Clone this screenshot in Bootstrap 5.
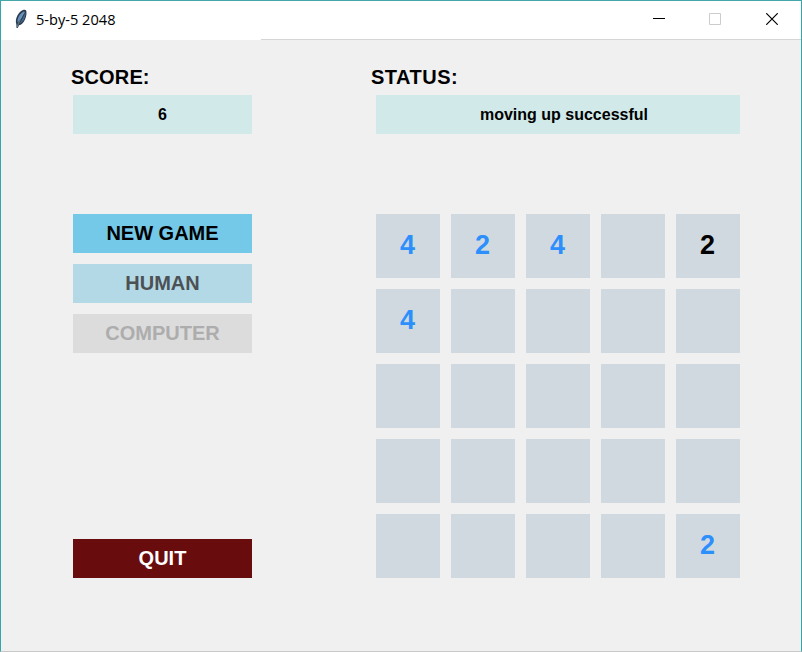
<!DOCTYPE html>
<html lang="en">
<head>
<meta charset="utf-8">
<title>5-by-5 2048</title>
<meta name="viewport" content="width=device-width, initial-scale=1">
<link href="https://cdn.jsdelivr.net/npm/bootstrap@5.3.0/dist/css/bootstrap.min.css" rel="stylesheet">
<style>
body { font-family: "Liberation Sans", Arial, sans-serif; font-kerning: none; color: #000; }
.window { width: 802px; height: 652px; background: #f0f0f0; border: 1px solid #35a5ac; border-top-color: #45a7a7; border-bottom-color: #c8c8c8; }
.titlebar { height: 39px; background: linear-gradient(#d5d5d5, #d5d5d5) 260px 100% / 100% 1px no-repeat #fff; padding: 0 1px 3px 13px; }
.titlebar h1 { font: 400 14.6px/20px "Open Sans", "Noto Sans", sans-serif; letter-spacing: 0; margin: 0 0 0 7px; }
.winbtn { width: 56.5px; height: 36px; padding: 0 0 1px; background: none; border: 0; }
.client { padding: 26px 61px 0 72px; }
.side { width: 179px; }
.main { width: 364px; }
.heading { font: 700 20px/23px "Liberation Sans", Arial, sans-serif; letter-spacing: .15px; margin: 0 0 6px -2px; }
.main .heading { margin-left: -5px; letter-spacing: .5px; }
.field { height: 39px; background: #d1eae9; font-size: 16px; font-weight: 700; margin-bottom: 80px; }
.status-text { padding-left: 12px; }
.btn-game { --bs-btn-padding-y: 0; --bs-btn-border-radius: 0; --bs-btn-border-width: 0; height: 39px; font-size: 20px; line-height: 37px; font-weight: 700; }
.btn-new { background: #74c9e8; color: #000; }
.btn-human { background: #b4d9e6; color: #4c5155; }
.btn-computer { background: #dcdcdc; color: #adadad; }
.btn-quit { background: #690c0e; color: #fff; }
.btn-stack { gap: 11px; height: 364px; }
.board { display: grid; grid-template: repeat(5, 64px) / repeat(5, 64px); gap: 11px; }
.tile { background: #d1d9e0; color: #2c8ffb; font-size: 27px; font-weight: 700; line-height: 62px; text-align: center; padding-right: 1px; }
.tile-new { color: #000; }
</style>
</head>
<body class="overflow-hidden">
<div class="window">
  <header class="titlebar d-flex align-items-center">
    <svg width="15" height="20" viewBox="0 0 15 20" aria-hidden="true">
      <path d="M2.500 19 2.300 15C1 11 3 5.500 6.500 2.500 8.500 .8 11 .2 12 1.300c1 2 .5 6-1 9.200-1.400 3-3.600 5.500-6 5.700L3.800 19z" fill="#2b3b4c"/>
      <path d="M3.500 13.500C3 9 6 4 10.500 2 9 6 7 10 3.500 13.500z" fill="#608fc0"/>
      <path d="M5 14.700C8 11.500 9.700 7.500 11.500 3c.4 4.500-1.800 10.500-6.500 11.700z" fill="#446a91"/>
      <path d="M3 18.500C4.500 13 7.500 8 10.500 3" fill="none" stroke="#98b5d0" stroke-width=".6"/>
    </svg>
    <h1>5-by-5 2048</h1>
    <div class="ms-auto d-flex">
      <button class="winbtn" aria-label="Minimize"><svg width="12" height="12" viewBox="0 0 12 12"><path d="M0 5.500h12" stroke="#000"/></svg></button>
      <button class="winbtn" aria-label="Maximize" disabled><svg width="12" height="12" viewBox="0 0 12 12"><path d="M.5.5h11v11H.5z" fill="none" stroke="#ccc"/></svg></button>
      <button class="winbtn" aria-label="Close"><svg width="12" height="12" viewBox="0 0 12 12"><path d="m.2.200 11.600 11.600M11.800.2.200 11.800" stroke="#000" stroke-width="1.200"/></svg></button>
    </div>
  </header>
  <main class="client d-flex justify-content-between">
    <section class="side">
      <h2 class="heading">SCORE:</h2>
      <div class="field d-flex align-items-center justify-content-center">6</div>
      <div class="btn-stack d-flex flex-column">
        <button class="btn btn-game btn-new">NEW GAME</button>
        <button class="btn btn-game btn-human">HUMAN</button>
        <button class="btn btn-game btn-computer">COMPUTER</button>
        <button class="btn btn-game btn-quit mt-auto">QUIT</button>
      </div>
    </section>
    <section class="main">
      <h2 class="heading">STATUS:</h2>
      <div class="field status-text d-flex align-items-center justify-content-center">moving up successful</div>
      <div class="board">
        <div class="tile">4</div><div class="tile">2</div><div class="tile">4</div><div class="tile"></div><div class="tile tile-new">2</div>
        <div class="tile">4</div><div class="tile"></div><div class="tile"></div><div class="tile"></div><div class="tile"></div>
        <div class="tile"></div><div class="tile"></div><div class="tile"></div><div class="tile"></div><div class="tile"></div>
        <div class="tile"></div><div class="tile"></div><div class="tile"></div><div class="tile"></div><div class="tile"></div>
        <div class="tile"></div><div class="tile"></div><div class="tile"></div><div class="tile"></div><div class="tile">2</div>
      </div>
    </section>
  </main>
</div>
<script src="https://cdn.jsdelivr.net/npm/bootstrap@5.3.0/dist/js/bootstrap.bundle.min.js"></script>
</body>
</html>
